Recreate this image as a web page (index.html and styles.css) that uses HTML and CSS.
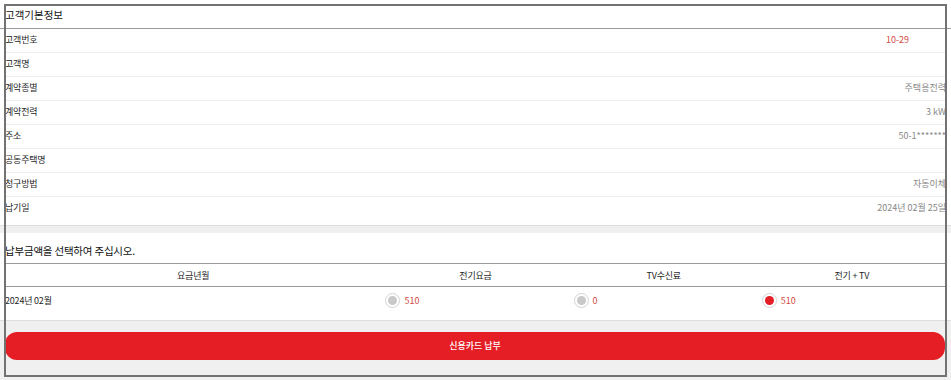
FILE: index.html
```html
<html>
<head>
    <title>고객기본정보</title>
    <link rel="stylesheet" href="styles.css">
</head>

<body>
    <div class="page">
        <section class="info">
            <h2 class="info-title">고객기본정보</h2>
            <div class="rows">
                <div class="row"><span class="label">고객번호</span><span class="value red num-pad">10-29</span></div>
                <div class="row"><span class="label">고객명</span><span class="value"></span></div>
                <div class="row"><span class="label">계약종별</span><span class="value">주택용전력</span></div>
                <div class="row"><span class="label">계약전력</span><span class="value">3 kW</span></div>
                <div class="row"><span class="label">주소</span><span class="value">50-1*******</span></div>
                <div class="row"><span class="label">공동주택명</span><span class="value"></span></div>
                <div class="row"><span class="label">청구방법</span><span class="value">자동이체</span></div>
                <div class="row last"><span class="label">납기일</span><span class="value">2024년 02월 25일</span></div>
            </div>
        </section>

        <div class="gap"></div>

        <section class="pay">
            <h2 class="pay-title">납부금액을 선택하여 주십시오.</h2>
            <table class="bill">
                <thead>
                    <tr>
                        <th class="col-month">요금년월</th>
                        <th>전기요금</th>
                        <th>TV수신료</th>
                        <th>전기 + TV</th>
                    </tr>
                </thead>
                <tbody>
                    <tr>
                        <td>2024년 02월</td>
                        <td><label class="choice"><input type="radio" name="amount"> 510</label></td>
                        <td><label class="choice"><input type="radio" name="amount"> 0</label></td>
                        <td><label class="choice"><input type="radio" name="amount" checked> 510</label></td>
                    </tr>
                </tbody>
            </table>
        </section>

        <div class="gap tall"></div>

        <div class="actions">
            <button class="pay-btn">신용카드 납부</button>
        </div>

        <!-- outline drawn over the page -->
        <div class="frame"></div>
    </div>
</body>
</html>
```

FILE: styles.css
```css
html, body {
    margin: 0;
    padding: 0;
}

body {
    background: #f0f0f0;
    font-family: "Noto Sans CJK KR", "Noto Sans", sans-serif;
    color: #333;
}

.page {
    position: relative;
    min-height: 380px;
    background: #f0f0f0;
}

/* customer info */
.info {
    background: #fff;
    padding: 4px 5px 4px 5px;
}

.info-title {
    margin: 0 -5px;
    padding: 0 5px 2px;
    height: 22px;
    line-height: 22px;
    font-size: 10.5px;
    font-weight: normal;
    color: #111;
    border-bottom: 1px solid #9a9a9a;
}

.row {
    display: flex;
    justify-content: space-between;
    align-items: center;
    height: 20px;
    padding-bottom: 3px;
    border-bottom: 1px solid #eeeeee;
    font-size: 9px;
}

.row.last {
    border-bottom: none;
    height: 21px;
}

.label {
    color: #1f1f1f;
    letter-spacing: -0.2px;
}

.value {
    color: #888;
    font-size: 9px;
}

.red {
    color: #d04a42;
}

.num-pad {
    padding-right: 37px;
}

.gap {
    height: 7px;
    border-top: 1px solid #dddddd;
    background: #f0f0f0;
}

.gap.tall {
    height: 11px;
}

/* payment choice */
.pay {
    background: #fff;
    padding: 0 5px;
}

.pay-title {
    margin: 0;
    padding: 11px 0 5px;
    line-height: 14px;
    font-size: 10.5px;
    font-weight: normal;
    color: #111;
    letter-spacing: -0.2px;
    border-bottom: 1px solid #9a9a9a;
}

.bill {
    width: 100%;
    border-collapse: collapse;
    table-layout: fixed;
}

.bill th {
    height: 22px;
    padding: 2px 0 0;
    font-size: 9px;
    font-weight: normal;
    color: #1f1f1f;
    letter-spacing: -0.2px;
    text-align: center;
    border-bottom: 1px solid #9a9a9a;
}

.bill th.col-month {
    width: 40%;
}

.bill td {
    padding: 6px 0 12px;
    height: 14px;
    font-size: 9px;
    color: #1f1f1f;
    letter-spacing: -0.2px;
    vertical-align: middle;
}

.choice {
    display: flex;
    align-items: center;
    gap: 4px;
    padding-left: 4px;
    font-size: 9px;
    letter-spacing: 0;
    color: #d04a42;
}

.choice input {
    appearance: none;
    -webkit-appearance: none;
    margin: 0;
    width: 15px;
    height: 15px;
    border-radius: 50%;
    border: 1px solid #d4d4d4;
    background: #fff;
    display: flex;
    align-items: center;
    justify-content: center;
}

.choice input::after {
    content: "";
    width: 9px;
    height: 9px;
    border-radius: 50%;
    background: #c9c9c9;
}

.choice input:checked::after {
    background: #e41e26;
}

.actions {
    padding: 0 6px 0 5px;
}

.pay-btn {
    display: block;
    width: 100%;
    height: 28px;
    border: none;
    border-radius: 12px;
    background: #e51d25;
    color: #fff;
    font-family: "Noto Sans CJK KR", "Noto Sans", sans-serif;
    font-size: 9px;
    font-weight: 500;
}

.frame {
    position: absolute;
    left: 4px;
    top: 4px;
    width: 943px;
    height: 373px;
    box-sizing: border-box;
    border: 2px solid #727272;
    pointer-events: none;
}
```
